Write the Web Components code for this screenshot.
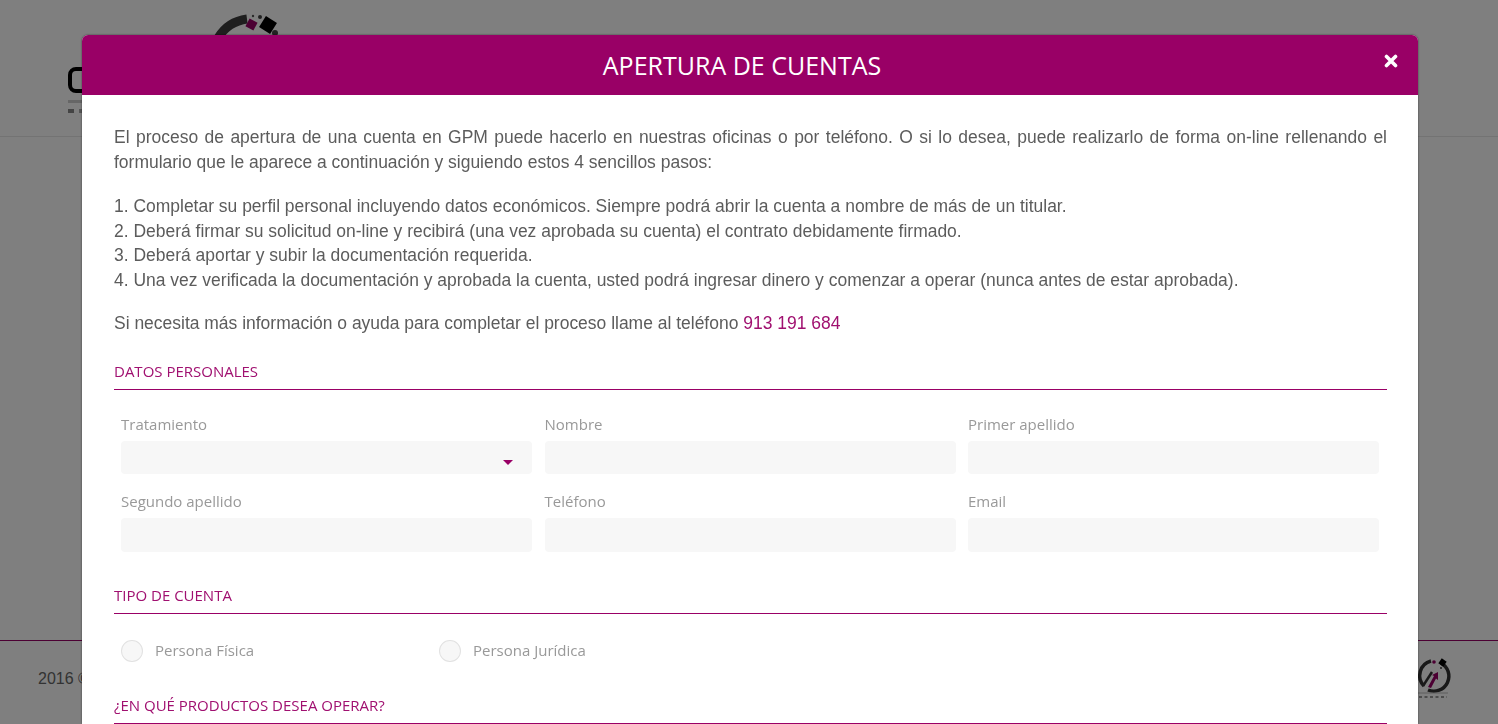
<!DOCTYPE html>
<html lang="es"><head><meta charset="utf-8"><title>Apertura de cuentas</title>
<style>
html,body{margin:0;height:724px;overflow:hidden;background:#fff;font-family:"Liberation Sans",Arial,sans-serif}
a{color:#a01070;text-decoration:none}
</style></head><body>
<x-site></x-site>
<x-backdrop></x-backdrop>
<x-modal heading="APERTURA DE CUENTAS">
  <x-copy>
    <p class="j">El proceso de apertura de una cuenta en GPM puede hacerlo en nuestras oficinas o por teléfono. O si lo desea, puede realizarlo de forma on-line rellenando el formulario que le aparece a continuación y siguiendo estos 4 sencillos pasos:</p>
    <p class="s">1. Completar su perfil personal incluyendo datos económicos. Siempre podrá abrir la cuenta a nombre de más de un titular.<br>
    2. Deberá firmar su solicitud on-line y recibirá (una vez aprobada su cuenta) el contrato debidamente firmado.<br>
    3. Deberá aportar y subir la documentación requerida.<br>
    4. Una vez verificada la documentación y aprobada la cuenta, usted podrá ingresar dinero y comenzar a operar (nunca antes de estar aprobada).</p>
    <p class="l">Si necesita más información o ayuda para completar el proceso llame al teléfono <a>913 191 684</a></p>
  </x-copy>
  <x-section heading="DATOS PERSONALES">
    <x-fields>
      <x-field label="Tratamiento" select></x-field>
      <x-field label="Nombre"></x-field>
      <x-field label="Primer apellido"></x-field>
      <x-field label="Segundo apellido"></x-field>
      <x-field label="Teléfono"></x-field>
      <x-field label="Email"></x-field>
    </x-fields>
  </x-section>
  <x-section heading="TIPO DE CUENTA">
    <x-radios>
      <x-radio label="Persona Física"></x-radio>
      <x-radio label="Persona Jurídica"></x-radio>
    </x-radios>
  </x-section>
  <x-section heading="¿EN QUÉ PRODUCTOS DESEA OPERAR?"></x-section>
</x-modal>
<script>
function def(name, html){
  customElements.define(name, class extends HTMLElement{
    constructor(){super();this.attachShadow({mode:'open'});}
    connectedCallback(){
      this.shadowRoot.innerHTML = typeof html==='function'?html(this):html;
    }
  });
}
def('x-site',`<style>
:host{display:flex;flex-direction:column;height:724px;font-family:"Liberation Sans",Arial,sans-serif}
header{height:136px;border-bottom:1px solid #e6e6e6;display:flex;align-items:flex-start;padding-left:68px}
.brand{width:220px;height:120px;filter:blur(.35px)}
main{flex:1}
footer{height:83px;border-top:1px solid #990066;display:flex;justify-content:space-between;padding:0 46px 0 38px}
.t{font-size:16px;color:#666;margin-top:29px;line-height:18px}
.fl{width:38px;height:48px;margin-top:13px;filter:blur(.45px)}
</style>
<header><svg class="brand" viewBox="0 0 220 120">
  <path d="M150 38A40 40 0 0 1 179 19" fill="none" stroke="#3c3c3c" stroke-width="9"/>
  <rect x="179" y="20" width="9" height="9" transform="rotate(28 183.500 24.500)" fill="#990066"/>
  <rect x="193.500" y="18.500" width="13" height="13" transform="rotate(32 200 25)" fill="#000"/>
  <circle cx="192" cy="17" r="2" fill="#444"/><circle cx="185" cy="16" r="1.200" fill="#555"/>
  <circle cx="207" cy="33" r="3" fill="#444"/>
  <rect x="2" y="69" width="22" height="22" rx="6" fill="none" stroke="#000" stroke-width="4"/>
  <rect x="0" y="100" width="14" height="3" fill="#ccc"/>
  <rect x="0" y="109" width="6" height="4" fill="#888"/>
  <rect x="11" y="109" width="3" height="4" fill="#aaa"/>
</svg></header><main></main>
<footer><span class="t">2016 ©</span>
<svg class="fl" viewBox="0 0 38 48">
  <path d="M10 32A15 15 0 0 1 17 7M27 9A15 15 0 0 1 14 36" fill="none" stroke="#333" stroke-width="3.500"/>
  <circle cx="20" cy="8" r="1.800" fill="#990066"/><rect x="25.500" y="5.500" width="6" height="6" transform="rotate(35 28.500 8.500)" fill="#000"/>
  <circle cx="27" cy="14" r="1" fill="#444"/>
  <path d="M9 32L18 18" stroke="#333" stroke-width="2.500"/><path d="M14 33L20 22L18 21L24 18L24 26L22 24.500L17 34Z" fill="#990066"/>
  <rect x="4" y="38.500" width="30" height="1" fill="#bbb"/>
  <path d="M5 43H33" stroke="#999" stroke-width="2" stroke-dasharray="3 2.500"/>
</svg></footer>`);
def('x-backdrop',`<style>:host{display:block;position:fixed;inset:0;background:rgba(0,0,0,.5)}</style>`);
def('x-modal',el=>`<style>
:host{display:flex;flex-direction:column;position:absolute;top:35px;left:82px;width:1336px;height:689px;background:#fff;border-radius:6px 6px 0 0;overflow:hidden;box-shadow:0 0 2px rgba(0,0,0,.6)}
.h{flex:none;height:60px;background:#990066;color:#fff;display:flex;align-items:center;justify-content:center;position:relative;padding-right:16px}
h1{margin:0;font:400 25px/34px "Open Sans",sans-serif}
.x{position:absolute;right:20px;top:19px}
.b{padding:30px 31px 0 32px;display:flex;flex-direction:column}
</style><div class="h"><h1>${el.getAttribute('heading')}</h1><svg class="x" width="14" height="14" viewBox="0 0 14 14" aria-hidden="true"><path d="M2.500 2.500L11.500 11.500M11.500 2.500L2.500 11.500" stroke="#fff" stroke-width="3.600" stroke-linecap="round"/></svg></div><div class="b"><slot></slot></div>`);
def('x-copy',`<style>:host{display:block;color:#5c5c5c;font-size:17.480px;line-height:24.600px}
::slotted(p){margin:0 0 19.800px}
::slotted(p.j){text-align:justify}
::slotted(p.s){margin-bottom:18.200px}
::slotted(p.l){margin-bottom:26.200px}
</style><slot></slot>`);
def('x-section',el=>`<style>:host{display:block}
h2{margin:0;padding:0 0 7.500px;font:400 15px/20px "Open Sans",sans-serif;color:#a01070;border-bottom:1px solid #990066}
</style><h2>${el.getAttribute('heading')}</h2><slot></slot>`);
def('x-fields',`<style>:host{display:grid;grid-template-columns:repeat(3,1fr);column-gap:12.500px;row-gap:16.600px;padding:23.700px 8px 33.600px 7px}</style><slot></slot>`);
def('x-field',el=>`<style>:host{display:flex;flex-direction:column;gap:7.300px;position:relative}
label{font:400 15px/20px "Open Sans",sans-serif;color:#999}
.i{height:33.600px;background:#f7f7f7;border-radius:4px;position:relative}
svg{position:absolute;right:19px;top:19px}
</style><label>${el.getAttribute('label')}</label><div class="i">${el.hasAttribute('select')?'<svg width="10" height="5" viewBox="0 0 10 5"><path d="M0 0H10L5 5Z" fill="#990066"/></svg>':''}</div>`);
def('x-radios',`<style>:host{display:flex;padding:25.900px 7px 33.400px}</style><slot></slot>`);
def('x-radio',el=>`<style>:host{display:flex;align-items:flex-start;width:318px;gap:12.500px}
i{display:block;width:19.500px;height:20px;border:1px solid #e2e2e2;border-radius:50%;background:#f7f7f7}
span{font:400 15px/20px "Open Sans",sans-serif;color:#999}
</style><i></i><span>${el.getAttribute('label')}</span>`);
</script>
</body></html>
